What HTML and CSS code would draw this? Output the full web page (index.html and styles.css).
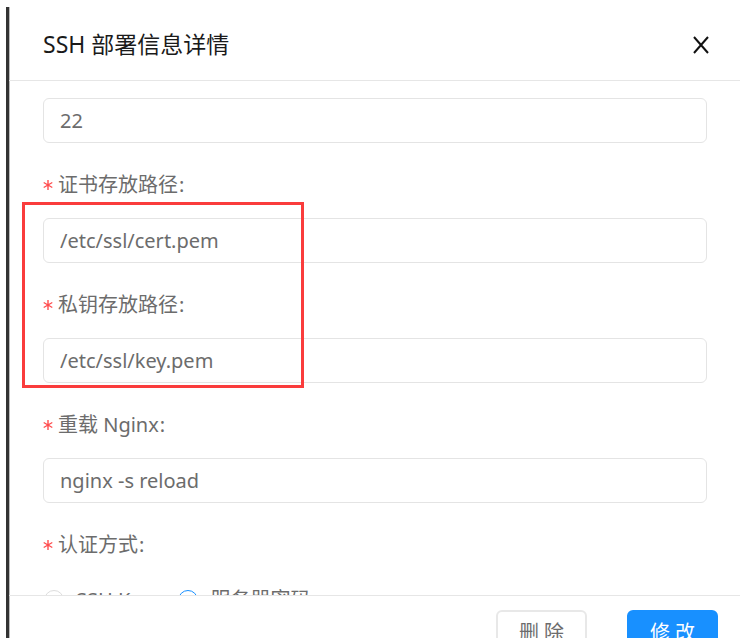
FILE: index.html
```
<!DOCTYPE html>
<html lang="zh-CN">
<head>
<meta charset="utf-8">
<meta name="viewport" content="width=device-width, initial-scale=1">
<title>SSH 部署信息详情</title>
<link rel="stylesheet" href="styles.css">
</head>
<body>
<section class="drawer">
  <header class="drawer-header">
    <h1 class="drawer-title">SSH 部署信息详情</h1>
    <button class="close" type="button" aria-label="关闭">
      <svg viewBox="0 0 16 18" width="16" height="18" aria-hidden="true"><path d="M1 1 15 17M15 1 1 17"/></svg>
    </button>
  </header>
  <form class="drawer-body" id="deploy">
    <div class="field">
      <input class="text-input" type="text" value="22" aria-label="端口">
    </div>
    <div class="highlight">
      <div class="field">
        <label class="label" for="cert"><svg class="star" viewBox="0 0 10 10" aria-hidden="true"><path d="M5 0V10M.7 2.5 9.3 7.5M9.3 2.5.7 7.5"/></svg>证书存放路径<span class="colon">:</span></label>
        <input class="text-input" id="cert" type="text" value="/etc/ssl/cert.pem">
      </div>
      <div class="field">
        <label class="label" for="key"><svg class="star" viewBox="0 0 10 10" aria-hidden="true"><path d="M5 0V10M.7 2.5 9.3 7.5M9.3 2.5.7 7.5"/></svg>私钥存放路径<span class="colon">:</span></label>
        <input class="text-input" id="key" type="text" value="/etc/ssl/key.pem">
      </div>
    </div>
    <div class="field">
      <label class="label" for="reload"><svg class="star" viewBox="0 0 10 10" aria-hidden="true"><path d="M5 0V10M.7 2.5 9.3 7.5M9.3 2.5.7 7.5"/></svg>重载 Nginx<span class="colon">:</span></label>
      <input class="text-input" id="reload" type="text" value="nginx -s reload">
    </div>
    <div class="field" role="radiogroup" aria-labelledby="auth">
      <div class="label" id="auth"><svg class="star" viewBox="0 0 10 10" aria-hidden="true"><path d="M5 0V10M.7 2.5 9.3 7.5M9.3 2.5.7 7.5"/></svg>认证方式<span class="colon">:</span></div>
      <div class="options">
        <label class="option"><input class="radio" type="radio" name="auth">SSH Key</label>
        <label class="option"><input class="radio" type="radio" name="auth" checked>服务器密码</label>
      </div>
    </div>
  </form>
  <footer class="drawer-footer">
    <button class="button" type="button">删 除</button>
    <button class="button primary" type="submit" form="deploy">修 改</button>
  </footer>
</section>
</body>
</html>
```
FILE: styles.css
```
*,
*::after {
  box-sizing: border-box;
}

body {
  margin: 0;
  height: 100vh;
  padding: 7px 0 0 6px;
  overflow: hidden;
  background: #fff;
  color: #6c6c6c;
  font: 20px/30px "Noto Sans", "Noto Sans CJK SC", sans-serif;
}

input,
button {
  font: inherit;
  color: inherit;
}

.drawer {
  display: flex;
  flex-direction: column;
  height: 100%;
  border-left: 3px solid #333;
  box-shadow: inset 1px 0 #bbb;
}

.drawer-header {
  display: flex;
  align-items: center;
  justify-content: space-between;
  height: 74px;
  flex: none;
  padding: 0 31px 0 34px;
  border-bottom: 1px solid #e6e6e6;
}

.drawer-title {
  margin: 0;
  color: #1a1a1a;
  font-size: 23px;
  font-weight: 400;
}

.close {
  display: flex;
  padding: 2px 0 0;
  border: 0;
  background: none;
}

.close path {
  fill: none;
  stroke: #111;
  stroke-width: 2;
}

.drawer-body {
  flex: 1;
  min-height: 0;
  overflow: hidden;
  padding: 17px 33px 0 34px;
}

.field {
  margin-bottom: 27px;
}

.label {
  display: flex;
  align-items: center;
  height: 30px;
  margin-bottom: 18px;
}

.star {
  width: 10px;
  height: 10px;
  margin-right: 5px;
  fill: none;
  stroke: #ff4d4f;
  stroke-width: 1.4;
}

.colon {
  margin-left: 1px;
}

.text-input {
  display: block;
  width: 100%;
  height: 45px;
  padding: 0 16px;
  border: 1px solid #e4e4e4;
  border-radius: 6px;
  background: #fff;
}

.highlight {
  position: relative;
}

.highlight::after {
  content: "";
  position: absolute;
  top: 32px;
  left: -21px;
  bottom: -5px;
  width: 282px;
  border: 3px solid #fa3c3c;
  pointer-events: none;
}

.options {
  display: flex;
  gap: 26px;
  padding-top: 7px;
}

.option {
  display: flex;
  align-items: center;
}

.radio {
  appearance: none;
  width: 20px;
  height: 20px;
  margin: 0 12px 0 1px;
  border: 1px solid #ddd;
  border-radius: 50%;
}

.radio:checked {
  border-color: #1890ff;
  background: radial-gradient(circle, #1890ff 4px, #fff 5px);
}

.drawer-footer {
  display: flex;
  flex: none;
  align-items: flex-start;
  justify-content: flex-end;
  gap: 40px;
  height: 43px;
  padding: 14px 22px 0;
  overflow: hidden;
  border-top: 1px solid #e6e6e6;
}

.button {
  flex: none;
  width: 91px;
  height: 46px;
  padding: 0;
  border: 2px solid #e8e8e8;
  border-radius: 6px;
  background: #fff;
}

.primary {
  border-color: #1890ff;
  background: #1890ff;
  color: #fff;
}
```
